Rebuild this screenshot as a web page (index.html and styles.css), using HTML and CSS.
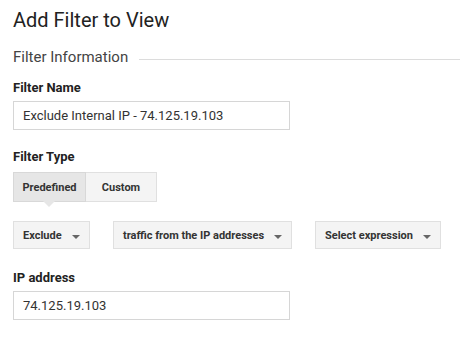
FILE: index.html
```html
<!DOCTYPE html>
<html>
<head>
<meta charset="utf-8">
<link rel="stylesheet" href="styles.css">
</head>
<body>
<div class="page">
  <h1 class="title">Add Filter to View</h1>
  <div class="section-head">
    <span class="section-text">Filter Information</span>
    <span class="section-rule"></span>
  </div>
  <div class="label label-name">Filter Name</div>
  <div class="input">Exclude Internal IP - 74.125.19.103</div>
  <div class="label label-type">Filter Type</div>
  <div class="toggle">
    <div class="tbtn tbtn-on">Predefined<span class="caret"></span></div>
    <div class="tbtn">Custom</div>
  </div>
  <div class="selects">
    <div class="sel sel-a">Exclude<span class="arrow"></span></div>
    <div class="sel sel-b">traffic from the IP addresses<span class="arrow"></span></div>
    <div class="sel sel-c">Select expression<span class="arrow"></span></div>
  </div>
  <div class="label label-ip">IP address</div>
  <div class="input">74.125.19.103</div>
</div>
</body>
</html>
```
FILE: styles.css
```css
html, body { margin: 0; padding: 0; background: #fff; }
body { font-family: Roboto, "Liberation Sans", Arial, sans-serif; color: #222; }
.page { padding: 8px 0 0 13px; width: 447px; }
.title { margin: 0; font-size: 20px; font-weight: 400; line-height: 24px; color: #222; }
.section-head { display: flex; align-items: center; margin-top: 16px; height: 18px; }
.section-text { font-size: 15px; color: #444; line-height: 18px; }
.section-rule { flex: 1; height: 1px; background: #dcdcdc; margin-left: 11px; margin-top: 4px; }
.label { font-size: 13px; font-weight: 700; color: #222; line-height: 16px; }
.label-name { margin-top: 14px; }
.label-type { margin-top: 19px; }
.label-ip { margin-top: 21px; }
.input { margin-top: 5px; width: 266px; height: 27px; border: 1px solid #d6d6d6; padding-left: 9px; font-size: 13px; line-height: 27px; color: #333; }
.toggle { display: flex; margin-top: 7px; }
.tbtn { position: relative; height: 28px; width: 70px; border: 1px solid #e0e0e0; background: #f4f4f4; font-size: 11px; font-weight: 700; color: #333; display: flex; align-items: center; justify-content: center; }
.tbtn + .tbtn { border-left: none; }
.tbtn-on { width: 71px; background: #e6e6e6; border-color: #d8d8d8; }
.caret { position: absolute; left: 29px; bottom: -6px; width: 0; height: 0; border-left: 6px solid transparent; border-right: 6px solid transparent; border-top: 6px solid #e6e6e6; }
.selects { display: flex; margin-top: 19px; }
.sel { height: 26px; border: 1px solid #e0e0e0; background: #f4f4f4; font-size: 11px; font-weight: 700; color: #333; display: flex; align-items: center; padding-left: 9px; box-sizing: content-box; position: relative; }
.arrow { position: absolute; right: 9px; top: 13px; width: 0; height: 0; border-left: 4px solid transparent; border-right: 4px solid transparent; border-top: 4px solid #666; }
.sel-a { width: 66px; }
.sel-b { width: 168px; margin-left: 23px; }
.sel-c { width: 115px; margin-left: 23px; }
```
